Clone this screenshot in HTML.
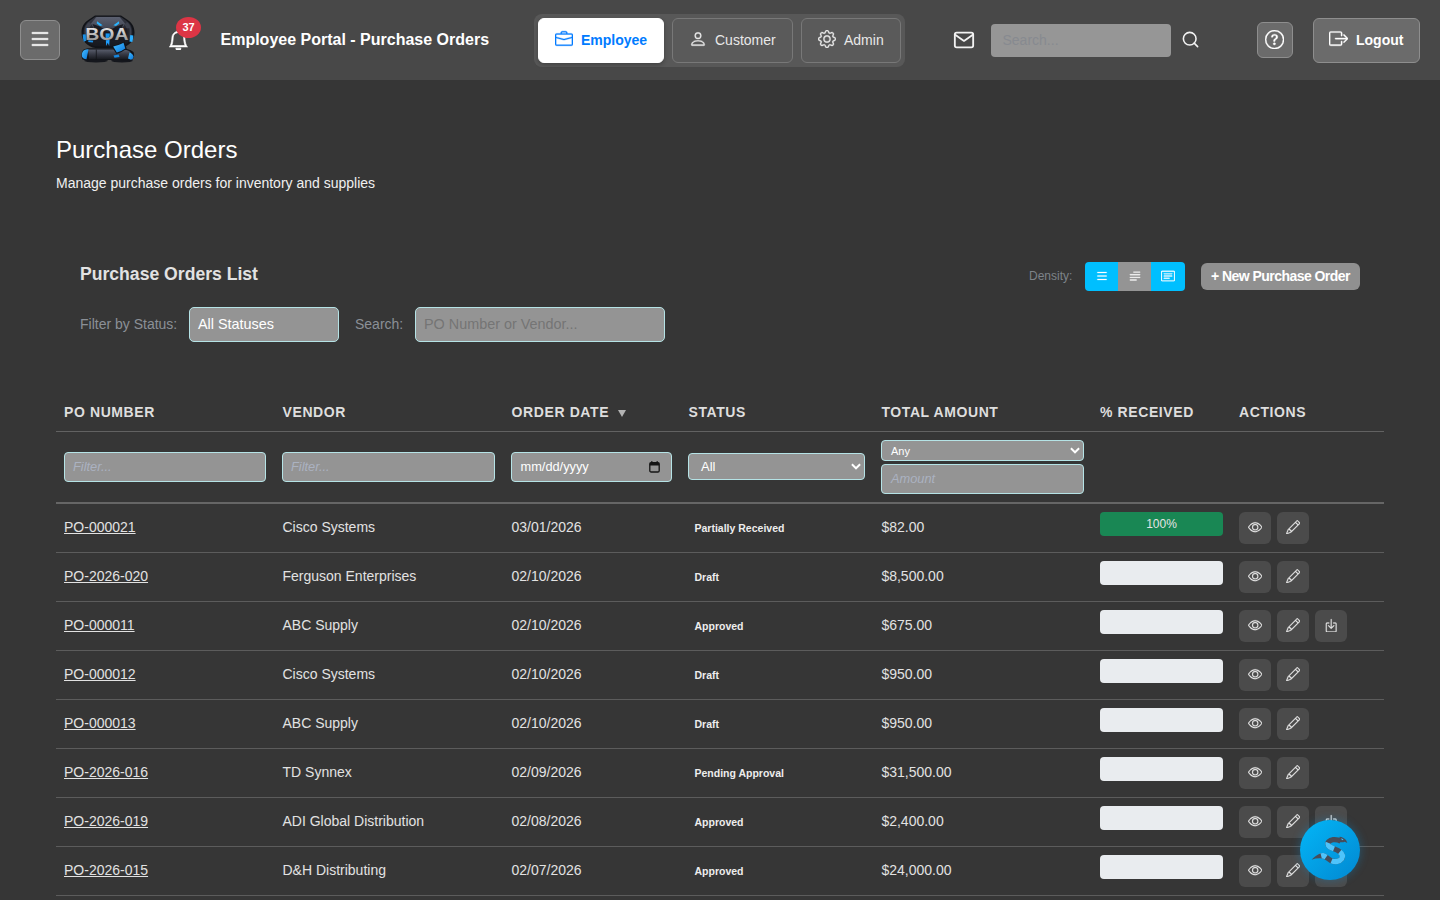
<!DOCTYPE html>
<html lang="en">
<head>
<meta charset="utf-8">
<title>Employee Portal - Purchase Orders</title>
<style>
*{box-sizing:border-box;margin:0;padding:0}
html,body{width:1440px;height:900px;overflow:hidden}
body{background:#363636;color:#e6e6e6;font-family:"Liberation Sans",sans-serif;font-size:14px;position:relative}
.abs{position:absolute}
input,select,button{font-family:"Liberation Sans",sans-serif;outline:none}
/* header */
#hdr{position:absolute;left:0;top:0;width:1440px;height:80px;background:#484848}
#burger{left:20px;top:20px;width:40px;height:40px;border-radius:6px;background:#6b6b6b;border:1px solid #8e8e8e}
#title{left:220.500px;top:30px;font-size:16px;font-weight:bold;color:#fff;line-height:20px;white-space:nowrap}
#badge{left:176px;top:17px;width:25px;height:21px;border-radius:50%;background:#dc3545;color:#fff;font-size:11px;font-weight:bold;text-align:center;line-height:21px}
#tabs{left:534px;top:14px;width:371px;height:53px;border-radius:8px;background:#585858}
.tab{position:absolute;top:4px;height:45px;border-radius:6px;border:1px solid #787878;background:#5a5a5a;color:#e8e8e8;font-size:14px;line-height:42px;white-space:nowrap}
.tab.on{background:#fff;border-color:#fff;color:#007bff;font-weight:bold;box-shadow:0 2px 4px rgba(0,0,0,.25)}
.tab span{position:absolute;top:0}
#srch{left:991px;top:24px;width:180px;height:33px;border-radius:4px;background:#969696;color:#878a90;font-size:14px;line-height:32px;padding-left:11.500px}
#help{left:1257px;top:22px;width:36px;height:36px;border-radius:6px;background:#6b6b6b;border:1px solid #8e8e8e}
#logout{left:1313px;top:18px;width:107px;height:45px;border-radius:6px;background:#6b6b6b;border:1px solid #8e8e8e;color:#fff;font-weight:bold;font-size:14px;line-height:43px}
/* page */
#h1{left:56px;top:136px;font-size:24px;line-height:28px;color:#fff;white-space:nowrap}
#sub{left:56px;top:175px;font-size:14px;line-height:16px;color:#f0f0f0;white-space:nowrap}
#h2{left:80px;top:263px;font-size:17.6px;font-weight:bold;line-height:22px;color:#e2e2e2;white-space:nowrap}
.lbl{font-size:14px;color:#8b9096;line-height:16px;white-space:nowrap}
.inp{background:#949494;border:1px solid #b5e3e6;border-radius:4px;color:#fff}
.ph{position:absolute;white-space:nowrap}
#dens{left:1085px;top:262px;width:100px;height:29px;border-radius:4px;overflow:hidden;background:#00bfff}
#newpo{left:1201px;top:263px;width:159px;height:27px;border-radius:6px;background:#909090;color:#fff;font-weight:bold;font-size:14px;line-height:27px;text-align:center;white-space:nowrap;letter-spacing:-.55px;padding-left:0px}
/* table */
.th{top:404px;font-size:14px;font-weight:bold;letter-spacing:.6px;color:#dedede;line-height:16px;white-space:nowrap}
.hl{left:56px;width:1328px;background:#626262}
.row{position:absolute;left:56px;width:1328px;height:49px;border-bottom:1px solid #5c5c5c}
.row div{position:absolute;white-space:nowrap;line-height:16px}
.row .po{left:8px;top:15px;color:#e2e2e2;text-decoration:underline}
.row .vn{left:226.500px;top:15px;color:#e2e2e2}
.row .dt{left:455.500px;top:15px;color:#e2e2e2}
.row .st{left:638.500px;top:17px;font-size:10.500px;font-weight:bold;color:#ededed;line-height:14px}
.row .am{left:825.400px;top:15px;color:#e2e2e2}
.row .pg{left:1044px;top:8px;width:123px;height:24px;border-radius:4px;background:#e9ecef}
.row .b{top:8px;width:32px;height:32px;border-radius:6px;background:#4b4b4b}
select.inp{padding:0 8px}
input.inp{padding:0 8px}
#chat{left:1300px;top:820px;width:60px;height:60px;border-radius:50%;background:linear-gradient(135deg,#03b6f7 0%,#0288d1 100%);box-shadow:0 0 9px 1px rgba(0,160,245,.26)}
</style>
</head>
<body>
<div id="hdr">
  <div id="burger" class="abs"><svg class="abs" style="left:7px;top:6px" width="24" height="24" viewBox="0 0 16 16" fill="#fff" stroke="#fff" stroke-width="0.3"><path fill-rule="evenodd" d="M2.5 12a.5.5 0 0 1 .5-.5h10a.5.5 0 0 1 0 1H3a.5.5 0 0 1-.5-.5m0-4a.5.5 0 0 1 .5-.5h10a.5.5 0 0 1 0 1H3a.5.5 0 0 1-.5-.5m0-4a.5.5 0 0 1 .5-.5h10a.5.5 0 0 1 0 1H3a.5.5 0 0 1-.5-.5"/></svg></div>
  <!--LOGO_START--><svg class="abs" style="left:76px;top:10px" width="64" height="60" viewBox="76 10 64 60">
<defs>
<linearGradient id="gH" x1="0" y1="0" x2="0" y2="1"><stop offset="0" stop-color="#343742"/><stop offset=".5" stop-color="#22242d"/><stop offset="1" stop-color="#16181e"/></linearGradient>
<linearGradient id="gT" x1="0" y1="0" x2="0" y2="1"><stop offset="0" stop-color="#5b6070"/><stop offset="1" stop-color="#343844"/></linearGradient>
<linearGradient id="gS" x1="0" y1="0" x2="0" y2="1"><stop offset="0" stop-color="#f0f0f0"/><stop offset=".45" stop-color="#c2c2c2"/><stop offset="1" stop-color="#808080"/></linearGradient>
<linearGradient id="gC" x1="0" y1="0" x2="0" y2="1"><stop offset="0" stop-color="#585c6b"/><stop offset=".45" stop-color="#383b46"/><stop offset="1" stop-color="#17191f"/></linearGradient>
<linearGradient id="gB" x1="0" y1="0" x2="1" y2="1"><stop offset="0" stop-color="#45bdff"/><stop offset="1" stop-color="#0b78dc"/></linearGradient>
</defs>
<ellipse cx="96" cy="60.800" rx="12" ry="1.600" fill="#15171d"/>
<ellipse cx="122" cy="60.800" rx="11" ry="1.600" fill="#15171d"/>
<path d="M95 15.400h26l6 4c5 3 7.500 7.500 7.500 13 0 8-6 14.500-14 15.500h-25c-8-1-14-7.500-14-15.500 0-5.500 2.500-10 7.500-13z" fill="#111318"/>
<path d="M95.500 16.800h25l5.500 3.800c4.300 2.800 6.500 6.700 6.500 11.700 0 7.200-5.300 13-12.500 14h-24c-7.200-1-12.500-6.800-12.500-14 0-5 2.200-8.900 6.500-11.700z" fill="url(#gH)"/>
<path d="M89 22c-3 2.500-4.500 6-4.500 10.300 0 3 1 5.800 2.800 8l3-2.300c-1.200-1.700-1.800-3.600-1.800-5.700 0-3 1.200-5.600 3.300-7.600zM127 22c3 2.500 4.500 6 4.500 10.300 0 3-1 5.800-2.800 8l-3-2.300c1.200-1.700 1.800-3.600 1.800-5.700 0-3-1.200-5.600-3.300-7.600z" fill="#3d414d"/>
<path d="M96.500 17h23l5.500 6.500-3.500 6-13.500 5.800-13.500-5.800-3.500-6z" fill="url(#gT)"/>
<path d="M92.500 24l8 2.800 7.500 5.600 7.500-5.600 8-2.800-2.600 5.800-12.900 5.600-12.900-5.600z" fill="#191b23"/>
<path d="M97 21.300l5.600 4-2.600.7-3.200-2.400z" fill="#2ab4ff"/>
<path d="M119 21.300l-5.600 4 2.600.7 3.200-2.400z" fill="#2ab4ff"/>
<path d="M82.700 34.500l3-.3.800 6.300-2.700 1.200c-.7-2.300-1-4.700-1.100-7.200z" fill="#1a8fe8"/>
<path d="M130.300 35l3 .6c0 2.200-.3 4.300-1 6.300l-2.900-.4z" fill="#2aaeff"/>
<path d="M88.300 39.800l5 .8-.5 2-4.500-.5z" fill="#1a8fe8"/>
<rect x="86" y="28.300" width="43.500" height="12" fill="#15171e" opacity=".6"/>
<rect x="105.600" y="33.400" width="4.200" height="6" fill="#1592f0"/>
<path d="M105.800 39.500h3.800l-.4 6.400-1.500-3.200-1.500 3.200z" fill="#1e9fff"/>
<text transform="translate(85.300,40) scale(1.190,1)" font-family="Liberation Sans, sans-serif" font-weight="bold" font-size="16.300" fill="url(#gS)" stroke="#25252a" stroke-width=".45" paint-order="stroke">BOA</text>
<path d="M83 50c2-1.600 5-2 8-1.800l30 0c5 .3 9 .8 12.500 3.800 1.200 3 .5 6.500-1.500 8-4 .5-8 .3-12 0h-30c-3 .3-5.500.3-7.500-.5-1.500-3-1.300-6.500.5-9.500z" fill="#111318"/>
<path d="M88 49.600h34c3 0 6 .7 8.500 2.500l.5 6.400c-3 1-6 .9-9 .7h-33z" fill="url(#gC)"/>
<path d="M96.300 49.600v9.600" stroke="#111318" stroke-width=".8"/>
<path d="M82.500 52c1-2 3.500-3 6-2.600l-2 9.800c-2.200-.2-3.800-1-4.400-2.400-.5-1.600-.3-3.300.4-4.800z" fill="url(#gB)"/>
<path d="M129.500 52.500c2 .5 3.500 2 4 4-.2 1.800-1 2.800-2.500 3.300l-3-1.300z" fill="url(#gB)"/>
<path d="M111.500 46.200c4.500-.8 9-2.300 13-4.800l2.200 7.400c-3 2.300-6.500 4-10.200 5.200z" fill="#111318"/>
<path d="M113.200 46.600c3.500-.8 7-2 10.300-3.800l1.800 5.600c-2.600 1.800-5.500 3.200-8.500 4.200z" fill="url(#gB)"/>
<path d="M113.500 55.600l5.200-1 .8 2.400-5 .8z" fill="#1688e0"/>
</svg>
<!--LOGO_END-->
  <svg class="abs" style="left:168px;top:29.5px" width="20.8" height="20.8" viewBox="0 0 16 16" fill="#fff" stroke="#fff" stroke-width="0.5"><path d="M8 16a2 2 0 0 0 2-2H6a2 2 0 0 0 2 2M8 1.918l-.797.161A4 4 0 0 0 4 6c0 .628-.134 2.197-.459 3.742-.16.767-.376 1.566-.663 2.258h10.244c-.287-.692-.502-1.490-.663-2.258C12.134 8.197 12 6.628 12 6a4 4 0 0 0-3.203-3.920zM14.220 12c.223.447.481.801.780 1H1c.299-.199.557-.553.780-1C2.680 10.200 3 6.880 3 6c0-2.420 1.720-4.440 4.005-4.901a1 1 0 1 1 1.990 0A5 5 0 0 1 13 6c0 .880.320 4.200 1.220 6"/></svg>
  <div id="badge" class="abs">37</div>
  <div id="title" class="abs">Employee Portal - Purchase Orders</div>
  <div id="tabs" class="abs">
    <div class="tab on" style="left:4px;width:126px"><svg class="abs" style="left:16px;top:11px" width="18" height="18" viewBox="0 0 16 16" fill="#007bff" stroke="#007bff" stroke-width="0.3"><path d="M6.500 1A1.500 1.500 0 0 0 5 2.500V3H1.500A1.500 1.500 0 0 0 0 4.500v8A1.500 1.500 0 0 0 1.500 14h13a1.500 1.500 0 0 0 1.500-1.500v-8A1.500 1.500 0 0 0 14.500 3H11v-.500A1.500 1.500 0 0 0 9.500 1zm0 1h3a.500.500 0 0 1 .500.500V3H6v-.500a.500.500 0 0 1 .500-.500m1.886 6.914L15 7.151V12.500a.500.500 0 0 1-.500.500h-13a.500.500 0 0 1-.500-.500V7.150l6.614 1.764a1.500 1.500 0 0 0 .772 0M1.500 4h13a.500.500 0 0 1 .500.500v1.616L8.129 7.948a.500.500 0 0 1-.258 0L1 6.116V4.500a.500.500 0 0 1 .500-.500"/></svg><span style="left:42px">Employee</span></div>
    <div class="tab" style="left:138px;width:121px"><svg class="abs" style="left:16px;top:11px" width="18" height="18" viewBox="0 0 16 16" fill="#e8e8e8" stroke="#e8e8e8" stroke-width="0.3"><path d="M8 8a3 3 0 1 0 0-6 3 3 0 0 0 0 6m2-3a2 2 0 1 1-4 0 2 2 0 0 1 4 0m4 8c0 1-1 1-1 1H3s-1 0-1-1 1-4 6-4 6 3 6 4m-1-.004c-.001-.246-.154-.986-.832-1.664C11.516 10.680 10.289 10 8 10s-3.516.680-4.168 1.332c-.678.678-.830 1.418-.832 1.664z"/></svg><span style="left:42px">Customer</span></div>
    <div class="tab" style="left:267px;width:100px"><svg class="abs" style="left:16px;top:11px" width="18" height="18" viewBox="0 0 16 16" fill="#e8e8e8" stroke="#e8e8e8" stroke-width="0.3"><path d="M8 4.754a3.246 3.246 0 1 0 0 6.492 3.246 3.246 0 0 0 0-6.492M5.754 8a2.246 2.246 0 1 1 4.492 0 2.246 2.246 0 0 1-4.492 0"/><path d="M9.796 1.343c-.527-1.790-3.065-1.790-3.592 0l-.094.319a.873.873 0 0 1-1.255.520l-.292-.160c-1.640-.892-3.433.902-2.540 2.541l.159.292a.873.873 0 0 1-.520 1.255l-.319.094c-1.790.527-1.790 3.065 0 3.592l.319.094a.873.873 0 0 1 .520 1.255l-.160.292c-.892 1.640.901 3.434 2.541 2.540l.292-.159a.873.873 0 0 1 1.255.520l.094.319c.527 1.790 3.065 1.790 3.592 0l.094-.319a.873.873 0 0 1 1.255-.520l.292.160c1.640.893 3.434-.902 2.540-2.541l-.159-.292a.873.873 0 0 1 .520-1.255l.319-.094c1.790-.527 1.790-3.065 0-3.592l-.319-.094a.873.873 0 0 1-.520-1.255l.160-.292c.893-1.640-.902-3.433-2.541-2.540l-.292.159a.873.873 0 0 1-1.255-.520zm-2.633.283c.246-.835 1.428-.835 1.674 0l.094.319a1.873 1.873 0 0 0 2.693 1.115l.291-.160c.764-.415 1.600.420 1.184 1.185l-.159.292a1.873 1.873 0 0 0 1.116 2.692l.318.094c.835.246.835 1.428 0 1.674l-.319.094a1.873 1.873 0 0 0-1.115 2.693l.160.291c.415.764-.420 1.600-1.185 1.184l-.291-.159a1.873 1.873 0 0 0-2.693 1.116l-.094.318c-.246.835-1.428.835-1.674 0l-.094-.319a1.873 1.873 0 0 0-2.692-1.115l-.292.160c-.764.415-1.600-.420-1.184-1.185l.159-.291A1.873 1.873 0 0 0 1.945 8.930l-.319-.094c-.835-.246-.835-1.428 0-1.674l.319-.094A1.873 1.873 0 0 0 3.060 4.377l-.160-.292c-.415-.764.420-1.600 1.185-1.184l.292.159a1.873 1.873 0 0 0 2.692-1.115z"/></svg><span style="left:42px">Admin</span></div>
  </div>
  <svg class="abs" style="left:953px;top:29px" width="22" height="22" viewBox="0 0 24 24" fill="none" stroke="#f2f2f2" stroke-width="2" stroke-linecap="round" stroke-linejoin="round"><path d="M4 4h16c1.100 0 2 .900 2 2v12c0 1.100-.900 2-2 2H4c-1.100 0-2-.900-2-2V6c0-1.100.900-2 2-2z"/><polyline points="22,6 12,13 2,6"/></svg>
  <div id="srch" class="abs">Search...</div>
  <svg class="abs" style="left:1180.600px;top:30.300px" width="19" height="19" viewBox="0 0 24 24" fill="none" stroke="#f2f2f2" stroke-width="2" stroke-linecap="round" stroke-linejoin="round"><circle cx="11" cy="11" r="8"/><line x1="21" y1="21" x2="16.650" y2="16.650"/></svg>
  <div id="help" class="abs"><svg class="abs" style="left:6.9px;top:6.5px" width="19.2" height="19.2" viewBox="0 0 16 16" fill="#fff" stroke="#fff" stroke-width="0.3"><path d="M8 15A7 7 0 1 1 8 1a7 7 0 0 1 0 14m0 1A8 8 0 1 0 8 0a8 8 0 0 0 0 16"/><path d="M5.255 5.786a.237.237 0 0 0 .241.247h.825c.138 0 .248-.113.266-.250.090-.656.540-1.134 1.342-1.134.686 0 1.314.343 1.314 1.168 0 .635-.374.927-.965 1.371-.673.489-1.206 1.060-1.168 1.987l.003.217a.250.250 0 0 0 .250.246h.811a.250.250 0 0 0 .250-.250v-.105c0-.718.273-.927 1.010-1.486.609-.463 1.244-.977 1.244-2.056 0-1.511-1.276-2.241-2.673-2.241-1.267 0-2.655.590-2.750 2.286m1.557 5.763c0 .533.425.927 1.010.927.609 0 1.028-.394 1.028-.927 0-.552-.420-.940-1.029-.940-.584 0-1.009.388-1.009.940"/></svg></div>
  <div id="logout" class="abs"><svg class="abs" style="left:14.8px;top:10.4px" width="19.2" height="19.2" viewBox="0 0 16 16" fill="#fff" stroke="#fff" stroke-width="0.3"><path fill-rule="evenodd" d="M10 12.500a.500.500 0 0 1-.500.500h-8a.500.500 0 0 1-.500-.500v-9a.500.500 0 0 1 .500-.500h8a.500.500 0 0 1 .500.500v2a.500.500 0 0 0 1 0v-2A1.500 1.500 0 0 0 9.500 2h-8A1.500 1.500 0 0 0 0 3.500v9A1.500 1.500 0 0 0 1.500 14h8a1.500 1.500 0 0 0 1.500-1.500v-2a.500.500 0 0 0-1 0z"/><path fill-rule="evenodd" d="M15.854 8.354a.500.500 0 0 0 0-.708l-3-3a.500.500 0 0 0-.708.708L14.293 7.500H5.500a.500.500 0 0 0 0 1h8.793l-2.147 2.146a.500.500 0 0 0 .708.708z"/></svg><span style="position:absolute;left:42px">Logout</span></div>
</div>
<div id="h1" class="abs">Purchase Orders</div>
<div id="sub" class="abs">Manage purchase orders for inventory and supplies</div>
<div id="h2" class="abs">Purchase Orders List</div>

<div class="abs lbl" style="left:80px;top:316px">Filter by Status:</div>
<div class="abs inp" style="left:189px;top:307px;width:150px;height:35px;border-radius:5px"><span class="ph" style="left:8px;top:8px;font-size:14.4px;line-height:16px;color:#fff">All Statuses</span></div>
<div class="abs lbl" style="left:355px;top:316px">Search:</div>
<div class="abs inp" style="left:415px;top:307px;width:250px;height:35px;border-radius:5px"><span class="ph" style="left:8px;top:8px;font-size:14.4px;line-height:16px;color:#757575">PO Number or Vendor...</span></div>

<div class="abs" style="left:1029px;top:269px;font-size:12px;line-height:14px;color:#7d8389;white-space:nowrap">Density:</div>
<div id="dens" class="abs">
  <div class="abs" style="left:33px;top:0;width:33px;height:29px;background:#949494"></div>
  <svg class="abs" style="left:10px;top:7px" width="14" height="14" viewBox="0 0 16 16" fill="#fff" stroke="#fff" stroke-width="0.3"><path fill-rule="evenodd" d="M2.5 12a.5.5 0 0 1 .5-.5h10a.5.5 0 0 1 0 1H3a.5.5 0 0 1-.5-.5m0-4a.5.5 0 0 1 .5-.5h10a.5.5 0 0 1 0 1H3a.5.5 0 0 1-.5-.5m0-4a.5.5 0 0 1 .5-.5h10a.5.5 0 0 1 0 1H3a.5.5 0 0 1-.5-.5"/></svg>
  <svg class="abs" style="left:43px;top:7px" width="14" height="14" viewBox="0 0 16 16" fill="#fff" stroke="#fff" stroke-width="0.3"><path fill-rule="evenodd" d="M2 12.500a.500.500 0 0 1 .500-.500h7a.500.500 0 0 1 0 1h-7a.500.500 0 0 1-.500-.500m0-3a.500.500 0 0 1 .500-.500h11a.500.500 0 0 1 0 1h-11a.500.500 0 0 1-.500-.500m0-3a.500.500 0 0 1 .500-.500h11a.500.500 0 0 1 0 1h-11a.500.500 0 0 1-.500-.500m4-3a.500.500 0 0 1 .500-.500h7a.500.500 0 0 1 0 1h-7a.500.500 0 0 1-.500-.500"/></svg>
  <svg class="abs" style="left:76px;top:7px" width="14" height="14" viewBox="0 0 16 16" fill="#fff" stroke="#fff" stroke-width="0.3"><path d="M14.500 3a.500.500 0 0 1 .500.500v9a.500.500 0 0 1-.500.500h-13a.500.500 0 0 1-.500-.500v-9a.500.500 0 0 1 .500-.500zm-13-1A1.500 1.500 0 0 0 0 3.500v9A1.500 1.500 0 0 0 1.500 14h13a1.500 1.500 0 0 0 1.500-1.500v-9A1.500 1.500 0 0 0 14.500 2z"/><path d="M3 5.500a.500.500 0 0 1 .500-.500h9a.500.500 0 0 1 0 1h-9a.500.500 0 0 1-.500-.500M3 8a.500.500 0 0 1 .500-.500h9a.500.500 0 0 1 0 1h-9A.500.500 0 0 1 3 8m0 2.500a.500.500 0 0 1 .500-.500h6a.500.500 0 0 1 0 1h-6a.500.500 0 0 1-.500-.500"/></svg>
</div>
<div id="newpo" class="abs">+ New Purchase Order</div>

<div class="abs th" style="left:64px">PO NUMBER</div>
<div class="abs th" style="left:282.500px">VENDOR</div>
<div class="abs th" style="left:511.600px">ORDER DATE </div>
<div class="abs th" style="left:688.500px">STATUS</div>
<div class="abs th" style="left:881.400px">TOTAL AMOUNT</div>
<div class="abs th" style="left:1100px">% RECEIVED</div>
<div class="abs th" style="left:1239px">ACTIONS</div>
<svg class="abs" style="left:618px;top:410px" width="8" height="7" viewBox="0 0 8 7"><polygon points="0,0 8,0 4,7" fill="#b4b4b4"/></svg>
<div class="abs hl" style="top:431px;height:1px"></div>

<div class="abs inp" style="left:64px;top:452px;width:202px;height:30px"><span class="ph" style="left:8px;top:6px;font-size:12.800px;line-height:16px;font-style:italic;color:#abb2c1">Filter...</span></div>
<div class="abs inp" style="left:282px;top:452px;width:213px;height:30px"><span class="ph" style="left:8px;top:6px;font-size:12.800px;line-height:16px;font-style:italic;color:#abb2c1">Filter...</span></div>
<div class="abs inp" style="left:511px;top:452px;width:161px;height:30px"><span class="ph" style="left:8.500px;top:6px;font-size:12.800px;line-height:16px;color:#fff">mm/dd/yyyy</span><svg class="abs" style="left:136.300px;top:7px" width="14" height="14" viewBox="0 0 14 14"><rect x="1.800" y="2.700" width="9.400" height="9.300" rx="1.300" fill="none" stroke="#151515" stroke-width="1.300"/><rect x="1.800" y="2.700" width="9.400" height="2.800" fill="#151515"/><rect x="3.100" y="1.200" width="1.400" height="2" fill="#151515"/><rect x="8.500" y="1.200" width="1.400" height="2" fill="#151515"/></svg></div>
<div class="abs inp" style="left:688px;top:453px;width:177px;height:27px"><span class="ph" style="left:12px;top:5px;font-size:13px;line-height:15px;color:#fff">All</span><svg class="abs" style="left:160.5px;top:9.3px" width="12" height="8" viewBox="0 0 12 8"><path d="M1.900 1.300L6 5.300L10.100 1.300" fill="none" stroke="#fff" stroke-width="1.900"/></svg></div>
<div class="abs inp" style="left:881px;top:440px;width:203px;height:21px"><span class="ph" style="left:9px;top:4px;font-size:11px;line-height:13px;color:#fff">Any</span><svg class="abs" style="left:186.5px;top:6.3px" width="12" height="8" viewBox="0 0 12 8"><path d="M1.900 1.300L6 5.300L10.100 1.300" fill="none" stroke="#fff" stroke-width="1.900"/></svg></div>
<div class="abs inp" style="left:881px;top:464px;width:203px;height:30px"><span class="ph" style="left:9px;top:6px;font-size:12.800px;line-height:16px;font-style:italic;color:#abb2c1">Amount</span></div>
<div class="abs hl" style="top:502px;height:2px;background:#666"></div>

<div class="row" style="top:504px"><div class="po">PO-000021</div><div class="vn">Cisco Systems</div><div class="dt">03/01/2026</div><div class="st">Partially Received</div><div class="am">$82.00</div><div class="pg" style="background:#198754;color:#e4e4e4;font-size:12px;text-align:center;line-height:25px">100%</div><div class="b" style="left:1183px"><svg class="abs" style="left:8.9px;top:7.8px" width="14.4" height="14.4" viewBox="0 0 16 16" fill="#e6e6e6" stroke="#e6e6e6" stroke-width="0.25"><path d="M16 8s-3-5.500-8-5.500S0 8 0 8s3 5.500 8 5.500S16 8 16 8M1.173 8a13 13 0 0 1 1.660-2.043C4.120 4.668 5.880 3.500 8 3.500s3.879 1.168 5.168 2.457A13 13 0 0 1 14.828 8q-.086.130-.195.288c-.335.480-.830 1.120-1.465 1.755C11.879 11.332 10.119 12.500 8 12.500s-3.879-1.168-5.168-2.457A13 13 0 0 1 1.172 8z"/><path d="M8 5.500a2.500 2.500 0 1 0 0 5 2.500 2.500 0 0 0 0-5M4.500 8a3.500 3.500 0 1 1 7 0 3.500 3.500 0 0 1-7 0"/></svg></div><div class="b" style="left:1221px"><svg class="abs" style="left:8.8px;top:7.6px" width="14.4" height="14.4" viewBox="0 0 16 16" fill="#e6e6e6" stroke="#e6e6e6" stroke-width="0.25"><path d="M12.146.146a.500.500 0 0 1 .708 0l3 3a.500.500 0 0 1 0 .708l-10 10a.500.500 0 0 1-.168.110l-5 2a.500.500 0 0 1-.650-.650l2-5a.500.500 0 0 1 .110-.168zM11.207 2.500 13.500 4.793 14.793 3.500 12.500 1.207zm1.586 3L10.500 3.207 4 9.707V10h.500a.500.500 0 0 1 .500.500v.500h.500a.500.500 0 0 1 .500.500v.500h.293zm-9.761 5.175-.106.106-1.528 3.821 3.821-1.528.106-.106A.500.500 0 0 1 5 12.500V12h-.500a.500.500 0 0 1-.500-.500V11h-.500a.500.500 0 0 1-.468-.325"/></svg></div></div>
<div class="row" style="top:553px"><div class="po">PO-2026-020</div><div class="vn">Ferguson Enterprises</div><div class="dt">02/10/2026</div><div class="st">Draft</div><div class="am">$8,500.00</div><div class="pg"></div><div class="b" style="left:1183px"><svg class="abs" style="left:8.9px;top:7.8px" width="14.4" height="14.4" viewBox="0 0 16 16" fill="#e6e6e6" stroke="#e6e6e6" stroke-width="0.25"><path d="M16 8s-3-5.500-8-5.500S0 8 0 8s3 5.500 8 5.500S16 8 16 8M1.173 8a13 13 0 0 1 1.660-2.043C4.120 4.668 5.880 3.500 8 3.500s3.879 1.168 5.168 2.457A13 13 0 0 1 14.828 8q-.086.130-.195.288c-.335.480-.830 1.120-1.465 1.755C11.879 11.332 10.119 12.500 8 12.500s-3.879-1.168-5.168-2.457A13 13 0 0 1 1.172 8z"/><path d="M8 5.500a2.500 2.500 0 1 0 0 5 2.500 2.500 0 0 0 0-5M4.500 8a3.500 3.500 0 1 1 7 0 3.500 3.500 0 0 1-7 0"/></svg></div><div class="b" style="left:1221px"><svg class="abs" style="left:8.8px;top:7.6px" width="14.4" height="14.4" viewBox="0 0 16 16" fill="#e6e6e6" stroke="#e6e6e6" stroke-width="0.25"><path d="M12.146.146a.500.500 0 0 1 .708 0l3 3a.500.500 0 0 1 0 .708l-10 10a.500.500 0 0 1-.168.110l-5 2a.500.500 0 0 1-.650-.650l2-5a.500.500 0 0 1 .110-.168zM11.207 2.500 13.500 4.793 14.793 3.500 12.500 1.207zm1.586 3L10.500 3.207 4 9.707V10h.500a.500.500 0 0 1 .500.500v.500h.500a.500.500 0 0 1 .500.500v.500h.293zm-9.761 5.175-.106.106-1.528 3.821 3.821-1.528.106-.106A.500.500 0 0 1 5 12.500V12h-.500a.500.500 0 0 1-.500-.500V11h-.500a.500.500 0 0 1-.468-.325"/></svg></div></div>
<div class="row" style="top:602px"><div class="po">PO-000011</div><div class="vn">ABC Supply</div><div class="dt">02/10/2026</div><div class="st">Approved</div><div class="am">$675.00</div><div class="pg"></div><div class="b" style="left:1183px"><svg class="abs" style="left:8.9px;top:7.8px" width="14.4" height="14.4" viewBox="0 0 16 16" fill="#e6e6e6" stroke="#e6e6e6" stroke-width="0.25"><path d="M16 8s-3-5.500-8-5.500S0 8 0 8s3 5.500 8 5.500S16 8 16 8M1.173 8a13 13 0 0 1 1.660-2.043C4.120 4.668 5.880 3.500 8 3.500s3.879 1.168 5.168 2.457A13 13 0 0 1 14.828 8q-.086.130-.195.288c-.335.480-.830 1.120-1.465 1.755C11.879 11.332 10.119 12.500 8 12.500s-3.879-1.168-5.168-2.457A13 13 0 0 1 1.172 8z"/><path d="M8 5.500a2.500 2.500 0 1 0 0 5 2.500 2.500 0 0 0 0-5M4.500 8a3.500 3.500 0 1 1 7 0 3.500 3.500 0 0 1-7 0"/></svg></div><div class="b" style="left:1221px"><svg class="abs" style="left:8.8px;top:7.6px" width="14.4" height="14.4" viewBox="0 0 16 16" fill="#e6e6e6" stroke="#e6e6e6" stroke-width="0.25"><path d="M12.146.146a.500.500 0 0 1 .708 0l3 3a.500.500 0 0 1 0 .708l-10 10a.500.500 0 0 1-.168.110l-5 2a.500.500 0 0 1-.650-.650l2-5a.500.500 0 0 1 .110-.168zM11.207 2.500 13.500 4.793 14.793 3.500 12.500 1.207zm1.586 3L10.500 3.207 4 9.707V10h.500a.500.500 0 0 1 .500.500v.500h.500a.500.500 0 0 1 .500.500v.500h.293zm-9.761 5.175-.106.106-1.528 3.821 3.821-1.528.106-.106A.500.500 0 0 1 5 12.500V12h-.500a.500.500 0 0 1-.500-.500V11h-.500a.500.500 0 0 1-.468-.325"/></svg></div><div class="b" style="left:1259px"><svg class="abs" style="left:8.9px;top:8.1px" width="14.4" height="14.4" viewBox="0 0 16 16" fill="#e6e6e6" stroke="#e6e6e6" stroke-width="0.25"><path fill-rule="evenodd" d="M3.500 6a.500.500 0 0 0-.500.500v8a.500.500 0 0 0 .500.500h9a.500.500 0 0 0 .500-.500v-8a.500.500 0 0 0-.500-.500h-2a.500.500 0 0 1 0-1h2A1.500 1.500 0 0 1 14 6.500v8a1.500 1.500 0 0 1-1.500 1.500h-9A1.500 1.500 0 0 1 2 14.500v-8A1.500 1.500 0 0 1 3.500 5h2a.500.500 0 0 1 0 1z"/><path fill-rule="evenodd" d="M7.646 11.854a.500.500 0 0 0 .708 0l3-3a.500.500 0 0 0-.708-.708L8.500 10.293V1.500a.500.500 0 0 0-1 0v8.793L5.354 8.146a.500.500 0 1 0-.708.708z"/></svg></div></div>
<div class="row" style="top:651px"><div class="po">PO-000012</div><div class="vn">Cisco Systems</div><div class="dt">02/10/2026</div><div class="st">Draft</div><div class="am">$950.00</div><div class="pg"></div><div class="b" style="left:1183px"><svg class="abs" style="left:8.9px;top:7.8px" width="14.4" height="14.4" viewBox="0 0 16 16" fill="#e6e6e6" stroke="#e6e6e6" stroke-width="0.25"><path d="M16 8s-3-5.500-8-5.500S0 8 0 8s3 5.500 8 5.500S16 8 16 8M1.173 8a13 13 0 0 1 1.660-2.043C4.120 4.668 5.880 3.500 8 3.500s3.879 1.168 5.168 2.457A13 13 0 0 1 14.828 8q-.086.130-.195.288c-.335.480-.830 1.120-1.465 1.755C11.879 11.332 10.119 12.500 8 12.500s-3.879-1.168-5.168-2.457A13 13 0 0 1 1.172 8z"/><path d="M8 5.500a2.500 2.500 0 1 0 0 5 2.500 2.500 0 0 0 0-5M4.500 8a3.500 3.500 0 1 1 7 0 3.500 3.500 0 0 1-7 0"/></svg></div><div class="b" style="left:1221px"><svg class="abs" style="left:8.8px;top:7.6px" width="14.4" height="14.4" viewBox="0 0 16 16" fill="#e6e6e6" stroke="#e6e6e6" stroke-width="0.25"><path d="M12.146.146a.500.500 0 0 1 .708 0l3 3a.500.500 0 0 1 0 .708l-10 10a.500.500 0 0 1-.168.110l-5 2a.500.500 0 0 1-.650-.650l2-5a.500.500 0 0 1 .110-.168zM11.207 2.500 13.500 4.793 14.793 3.500 12.500 1.207zm1.586 3L10.500 3.207 4 9.707V10h.500a.500.500 0 0 1 .500.500v.500h.500a.500.500 0 0 1 .500.500v.500h.293zm-9.761 5.175-.106.106-1.528 3.821 3.821-1.528.106-.106A.500.500 0 0 1 5 12.500V12h-.500a.500.500 0 0 1-.500-.500V11h-.500a.500.500 0 0 1-.468-.325"/></svg></div></div>
<div class="row" style="top:700px"><div class="po">PO-000013</div><div class="vn">ABC Supply</div><div class="dt">02/10/2026</div><div class="st">Draft</div><div class="am">$950.00</div><div class="pg"></div><div class="b" style="left:1183px"><svg class="abs" style="left:8.9px;top:7.8px" width="14.4" height="14.4" viewBox="0 0 16 16" fill="#e6e6e6" stroke="#e6e6e6" stroke-width="0.25"><path d="M16 8s-3-5.500-8-5.500S0 8 0 8s3 5.500 8 5.500S16 8 16 8M1.173 8a13 13 0 0 1 1.660-2.043C4.120 4.668 5.880 3.500 8 3.500s3.879 1.168 5.168 2.457A13 13 0 0 1 14.828 8q-.086.130-.195.288c-.335.480-.830 1.120-1.465 1.755C11.879 11.332 10.119 12.500 8 12.500s-3.879-1.168-5.168-2.457A13 13 0 0 1 1.172 8z"/><path d="M8 5.500a2.500 2.500 0 1 0 0 5 2.500 2.500 0 0 0 0-5M4.500 8a3.500 3.500 0 1 1 7 0 3.500 3.500 0 0 1-7 0"/></svg></div><div class="b" style="left:1221px"><svg class="abs" style="left:8.8px;top:7.6px" width="14.4" height="14.4" viewBox="0 0 16 16" fill="#e6e6e6" stroke="#e6e6e6" stroke-width="0.25"><path d="M12.146.146a.500.500 0 0 1 .708 0l3 3a.500.500 0 0 1 0 .708l-10 10a.500.500 0 0 1-.168.110l-5 2a.500.500 0 0 1-.650-.650l2-5a.500.500 0 0 1 .110-.168zM11.207 2.500 13.500 4.793 14.793 3.500 12.500 1.207zm1.586 3L10.500 3.207 4 9.707V10h.500a.500.500 0 0 1 .500.500v.500h.500a.500.500 0 0 1 .500.500v.500h.293zm-9.761 5.175-.106.106-1.528 3.821 3.821-1.528.106-.106A.500.500 0 0 1 5 12.500V12h-.500a.500.500 0 0 1-.500-.500V11h-.500a.500.500 0 0 1-.468-.325"/></svg></div></div>
<div class="row" style="top:749px"><div class="po">PO-2026-016</div><div class="vn">TD Synnex</div><div class="dt">02/09/2026</div><div class="st">Pending Approval</div><div class="am">$31,500.00</div><div class="pg"></div><div class="b" style="left:1183px"><svg class="abs" style="left:8.9px;top:7.8px" width="14.4" height="14.4" viewBox="0 0 16 16" fill="#e6e6e6" stroke="#e6e6e6" stroke-width="0.25"><path d="M16 8s-3-5.500-8-5.500S0 8 0 8s3 5.500 8 5.500S16 8 16 8M1.173 8a13 13 0 0 1 1.660-2.043C4.120 4.668 5.880 3.500 8 3.500s3.879 1.168 5.168 2.457A13 13 0 0 1 14.828 8q-.086.130-.195.288c-.335.480-.830 1.120-1.465 1.755C11.879 11.332 10.119 12.500 8 12.500s-3.879-1.168-5.168-2.457A13 13 0 0 1 1.172 8z"/><path d="M8 5.500a2.500 2.500 0 1 0 0 5 2.500 2.500 0 0 0 0-5M4.500 8a3.500 3.500 0 1 1 7 0 3.500 3.500 0 0 1-7 0"/></svg></div><div class="b" style="left:1221px"><svg class="abs" style="left:8.8px;top:7.6px" width="14.4" height="14.4" viewBox="0 0 16 16" fill="#e6e6e6" stroke="#e6e6e6" stroke-width="0.25"><path d="M12.146.146a.500.500 0 0 1 .708 0l3 3a.500.500 0 0 1 0 .708l-10 10a.500.500 0 0 1-.168.110l-5 2a.500.500 0 0 1-.650-.650l2-5a.500.500 0 0 1 .110-.168zM11.207 2.500 13.500 4.793 14.793 3.500 12.500 1.207zm1.586 3L10.500 3.207 4 9.707V10h.500a.500.500 0 0 1 .500.500v.500h.500a.500.500 0 0 1 .500.500v.500h.293zm-9.761 5.175-.106.106-1.528 3.821 3.821-1.528.106-.106A.500.500 0 0 1 5 12.500V12h-.500a.500.500 0 0 1-.500-.500V11h-.500a.500.500 0 0 1-.468-.325"/></svg></div></div>
<div class="row" style="top:798px"><div class="po">PO-2026-019</div><div class="vn">ADI Global Distribution</div><div class="dt">02/08/2026</div><div class="st">Approved</div><div class="am">$2,400.00</div><div class="pg"></div><div class="b" style="left:1183px"><svg class="abs" style="left:8.9px;top:7.8px" width="14.4" height="14.4" viewBox="0 0 16 16" fill="#e6e6e6" stroke="#e6e6e6" stroke-width="0.25"><path d="M16 8s-3-5.500-8-5.500S0 8 0 8s3 5.500 8 5.500S16 8 16 8M1.173 8a13 13 0 0 1 1.660-2.043C4.120 4.668 5.880 3.500 8 3.500s3.879 1.168 5.168 2.457A13 13 0 0 1 14.828 8q-.086.130-.195.288c-.335.480-.830 1.120-1.465 1.755C11.879 11.332 10.119 12.500 8 12.500s-3.879-1.168-5.168-2.457A13 13 0 0 1 1.172 8z"/><path d="M8 5.500a2.500 2.500 0 1 0 0 5 2.500 2.500 0 0 0 0-5M4.500 8a3.500 3.500 0 1 1 7 0 3.500 3.500 0 0 1-7 0"/></svg></div><div class="b" style="left:1221px"><svg class="abs" style="left:8.8px;top:7.6px" width="14.4" height="14.4" viewBox="0 0 16 16" fill="#e6e6e6" stroke="#e6e6e6" stroke-width="0.25"><path d="M12.146.146a.500.500 0 0 1 .708 0l3 3a.500.500 0 0 1 0 .708l-10 10a.500.500 0 0 1-.168.110l-5 2a.500.500 0 0 1-.650-.650l2-5a.500.500 0 0 1 .110-.168zM11.207 2.500 13.500 4.793 14.793 3.500 12.500 1.207zm1.586 3L10.500 3.207 4 9.707V10h.500a.500.500 0 0 1 .500.500v.500h.500a.500.500 0 0 1 .500.500v.500h.293zm-9.761 5.175-.106.106-1.528 3.821 3.821-1.528.106-.106A.500.500 0 0 1 5 12.500V12h-.500a.500.500 0 0 1-.500-.500V11h-.500a.500.500 0 0 1-.468-.325"/></svg></div><div class="b" style="left:1259px"><svg class="abs" style="left:8.9px;top:8.1px" width="14.4" height="14.4" viewBox="0 0 16 16" fill="#e6e6e6" stroke="#e6e6e6" stroke-width="0.25"><path fill-rule="evenodd" d="M3.500 6a.500.500 0 0 0-.500.500v8a.500.500 0 0 0 .500.500h9a.500.500 0 0 0 .500-.500v-8a.500.500 0 0 0-.500-.500h-2a.500.500 0 0 1 0-1h2A1.500 1.500 0 0 1 14 6.500v8a1.500 1.500 0 0 1-1.500 1.500h-9A1.500 1.500 0 0 1 2 14.500v-8A1.500 1.500 0 0 1 3.500 5h2a.500.500 0 0 1 0 1z"/><path fill-rule="evenodd" d="M7.646 11.854a.500.500 0 0 0 .708 0l3-3a.500.500 0 0 0-.708-.708L8.500 10.293V1.500a.500.500 0 0 0-1 0v8.793L5.354 8.146a.500.500 0 1 0-.708.708z"/></svg></div></div>
<div class="row" style="top:847px"><div class="po">PO-2026-015</div><div class="vn">D&amp;H Distributing</div><div class="dt">02/07/2026</div><div class="st">Approved</div><div class="am">$24,000.00</div><div class="pg"></div><div class="b" style="left:1183px"><svg class="abs" style="left:8.9px;top:7.8px" width="14.4" height="14.4" viewBox="0 0 16 16" fill="#e6e6e6" stroke="#e6e6e6" stroke-width="0.25"><path d="M16 8s-3-5.500-8-5.500S0 8 0 8s3 5.500 8 5.500S16 8 16 8M1.173 8a13 13 0 0 1 1.660-2.043C4.120 4.668 5.880 3.500 8 3.500s3.879 1.168 5.168 2.457A13 13 0 0 1 14.828 8q-.086.130-.195.288c-.335.480-.830 1.120-1.465 1.755C11.879 11.332 10.119 12.500 8 12.500s-3.879-1.168-5.168-2.457A13 13 0 0 1 1.172 8z"/><path d="M8 5.500a2.500 2.500 0 1 0 0 5 2.500 2.500 0 0 0 0-5M4.500 8a3.500 3.500 0 1 1 7 0 3.500 3.500 0 0 1-7 0"/></svg></div><div class="b" style="left:1221px"><svg class="abs" style="left:8.8px;top:7.6px" width="14.4" height="14.4" viewBox="0 0 16 16" fill="#e6e6e6" stroke="#e6e6e6" stroke-width="0.25"><path d="M12.146.146a.500.500 0 0 1 .708 0l3 3a.500.500 0 0 1 0 .708l-10 10a.500.500 0 0 1-.168.110l-5 2a.500.500 0 0 1-.650-.650l2-5a.500.500 0 0 1 .110-.168zM11.207 2.500 13.500 4.793 14.793 3.500 12.500 1.207zm1.586 3L10.500 3.207 4 9.707V10h.500a.500.500 0 0 1 .500.500v.500h.500a.500.500 0 0 1 .500.500v.500h.293zm-9.761 5.175-.106.106-1.528 3.821 3.821-1.528.106-.106A.500.500 0 0 1 5 12.500V12h-.500a.500.500 0 0 1-.500-.500V11h-.500a.500.500 0 0 1-.468-.325"/></svg></div><div class="b" style="left:1259px"><svg class="abs" style="left:8.9px;top:8.1px" width="14.4" height="14.4" viewBox="0 0 16 16" fill="#e6e6e6" stroke="#e6e6e6" stroke-width="0.25"><path fill-rule="evenodd" d="M3.500 6a.500.500 0 0 0-.500.500v8a.500.500 0 0 0 .500.500h9a.500.500 0 0 0 .500-.500v-8a.500.500 0 0 0-.500-.500h-2a.500.500 0 0 1 0-1h2A1.500 1.500 0 0 1 14 6.500v8a1.500 1.500 0 0 1-1.500 1.500h-9A1.500 1.500 0 0 1 2 14.500v-8A1.500 1.500 0 0 1 3.500 5h2a.500.500 0 0 1 0 1z"/><path fill-rule="evenodd" d="M7.646 11.854a.500.500 0 0 0 .708 0l3-3a.500.500 0 0 0-.708-.708L8.500 10.293V1.500a.500.500 0 0 0-1 0v8.793L5.354 8.146a.500.500 0 1 0-.708.708z"/></svg></div></div>

<div id="chat" class="abs"><svg class="abs" style="left:0;top:0" width="60" height="60" viewBox="1300 820 60 60">
<path d="M1320.500 856c.8-.3 1.600-.4 2.400-.4 3.200.7 5 3.400 8.200 5 3.800 1.800 8.600 1 10.600-1.800 2-3-.3-6.200-3.800-8.200-3.400-1.900-8-2.600-9.600-5.300-1.500-2.700 1.200-5.200 4.800-5.600 2.800-.3 5.600.3 7.800 1.700" fill="none" stroke="#474c59" stroke-width="5.200" stroke-linecap="butt"/>
<path d="M1320.500 856c.8-.3 1.600-.4 2.400-.4 3.200.7 5 3.400 8.200 5 3.800 1.800 8.600 1 10.600-1.800 2-3-.3-6.200-3.800-8.200-3.400-1.900-8-2.600-9.600-5.300-1.500-2.700 1.200-5.200 4.800-5.600 2.800-.3 5.600.3 7.800 1.700" fill="none" stroke="#4fc4fb" stroke-width="5.200" stroke-dasharray="6 6.500 19 6.500 9.500 100"/>
<path d="M1311.600 859.700c2.600-2.800 5.600-4.900 9-6.200l1.200 5c-3.600-.4-6.800 0-10.200 1.200z" fill="#474c59"/>
<path d="M1339.500 836.800c2.800.2 5.300 1.600 6.800 3.600l1 2.600-2.600-1.300c-1.700.8-3.600.8-5.300 0z" fill="#474c59"/>
<path d="M1341.200 838.300l2.400 1.200-1.600.8z" fill="#4fc4fb"/>
</svg></div>
</body>
</html>
